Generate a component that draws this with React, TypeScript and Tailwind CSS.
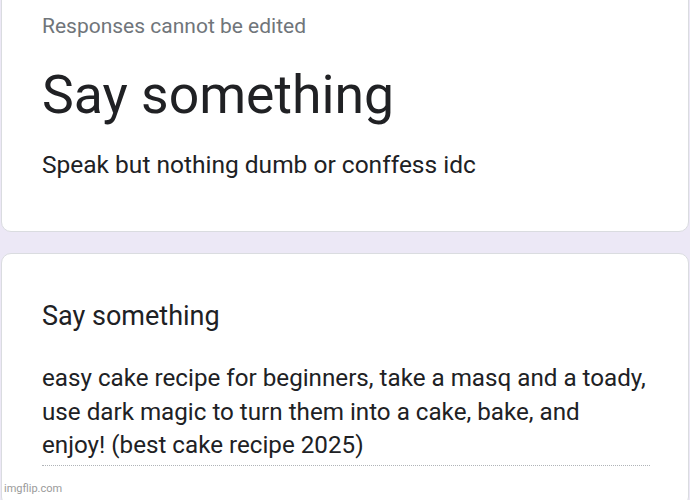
export default function App() {
  return (
    <div
      className="relative h-[500px] w-[690px] overflow-hidden bg-[#ece8f6] px-[1px]"
      style={{ fontFamily: "Roboto, 'Liberation Sans', sans-serif" }}
    >
      {/* Form header card */}
      <div className="-mt-[12px] rounded-[10px] border border-[#dadce0] bg-white pl-[40px] pr-6 pt-[23px] pb-[50px]">
        <p className="text-[21px] leading-[28px] text-[#70757a]">
          Responses cannot be edited
        </p>
        <h1 className="mt-[23px] text-[53.5px] leading-[64px] text-[#202124]">
          Say something
        </h1>
        <p className="mt-[22px] text-[24.5px] leading-[32px] text-[#202124]">
          Speak but nothing dumb or conffess idc
        </p>
      </div>

      {/* Question card */}
      <div className="mt-[21px] rounded-[10px] border border-[#dadce0] bg-white pl-[40px] pr-6 pt-[46px] pb-10">
        <h2 className="text-[27px] leading-[32px] text-[#202124]">
          Say something
        </h2>
        <div className="mt-[30px] w-[608px] border-b border-dotted border-[#b0b4b8] pb-[2px]">
          <p className="whitespace-nowrap text-[24.2px] leading-[33.5px] text-[#202124]">
            easy cake recipe for beginners, take a masq and a toady,
            <br />
            use dark magic to turn them into a cake, bake, and
            <br />
            enjoy! (best cake recipe 2025)
          </p>
        </div>
      </div>

      <span className="absolute bottom-[3px] left-[4px] text-[11px] text-[#9a9a9a]">
        imgflip.com
      </span>
    </div>
  );
}
